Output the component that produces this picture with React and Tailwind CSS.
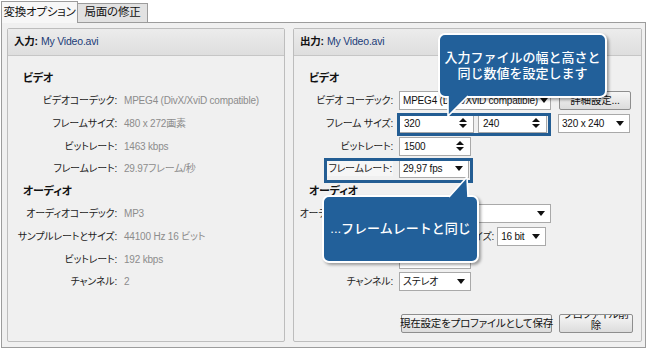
import React from 'react';

const FONT = {
  fontFamily: '"Liberation Sans", "Noto Sans CJK JP", sans-serif',
};

const Arrow = () => (
  <svg width="8" height="5" viewBox="0 0 8 5" className="shrink-0">
    <path d="M0 0 L8 0 L4 5 Z" fill="#111" />
  </svg>
);

const Spin = () => (
  <svg width="8" height="12" viewBox="0 0 8 12" className="shrink-0">
    <path d="M0 5 L8 5 L4 1 Z M0 7 L8 7 L4 11 Z" fill="#111" />
  </svg>
);

const Select = ({ w, children, hideText = false }) => (
  <div
    className="h-[19px] bg-white border border-[#a9a9a9] flex items-center justify-between pl-[3px] pr-[5px] text-[10px] text-[#111] whitespace-nowrap gap-[2px]"
    style={{ width: w }}
  >
    <span className={hideText ? 'invisible' : ''}>{children}</span>
    <Arrow />
  </div>
);

const SpinBox = ({ w, children }) => (
  <div
    className="h-[19px] bg-white border border-[#a9a9a9] flex items-center justify-between pl-[4px] pr-[6px] text-[10px] text-[#111]"
    style={{ width: w }}
  >
    <span>{children}</span>
    <Spin />
  </div>
);

const Button = ({ w, children, className = '' }) => (
  <div
    className={`h-[19px] border border-[#8e8e8e] rounded-[2px] bg-gradient-to-b from-[#f6f6f6] to-[#dcdcdc] flex items-center justify-center text-[10.5px] text-[#111] whitespace-nowrap ${className}`}
    style={{ width: w }}
  >
    {children}
  </div>
);

const GroupHeader = ({ label, file }) => (
  <div className="h-[27px] flex items-center px-[6px] bg-gradient-to-b from-[#ececec] to-[#dedede] border-b border-[#c6c6c6] text-[10.5px]">
    <span className="font-bold text-[#111]">{label}</span>
    <span className="ml-[3px] text-[#1c3c78]">{file}</span>
  </div>
);

const inputRows = [
  { heading: 'ビデオ' },
  { label: 'ビデオコーデック:', value: 'MPEG4 (DivX/XviD compatible)' },
  { label: 'フレームサイズ:', value: '480 x 272画素' },
  { label: 'ビットレート:', value: '1463 kbps' },
  { label: 'フレームレート:', value: '29.97フレーム/秒' },
  { heading: 'オーディオ' },
  { label: 'オーディオコーデック:', value: 'MP3' },
  { label: 'サンプルレートとサイズ:', value: '44100 Hz 16 ビット' },
  { label: 'ビットレート:', value: '192 kbps' },
  { label: 'チャンネル:', value: '2' },
];

const Row = ({ label, children, hideLabel = false }) => (
  <div className="h-[22.6px] flex items-center">
    <div className={`w-[99px] text-right text-[10px] text-[#222] whitespace-nowrap ${hideLabel ? 'invisible' : ''}`}>{label}</div>
    <div className="ml-[6px] flex items-center">{children}</div>
  </div>
);

export default function App() {
  return (
    <div
      className="w-[649px] h-[350px] bg-white relative overflow-hidden [font-feature-settings:'palt'] tracking-[-0.2px]"
      style={FONT}
    >
      {/* Tabs */}
      <div className="flex items-end h-[22px] pl-[1px]">
        <div className="w-[77px] h-[22px] border border-b-0 border-[#9c9c9c] bg-[#f7f7f7] flex items-center justify-center text-[11.5px] text-[#111] whitespace-nowrap relative z-10 -mb-px">
          変換オプション
        </div>
        <div className="w-[70px] h-[19px] border border-l-0 border-b-0 border-[#9c9c9c] bg-[#e2e2e2] flex items-center justify-center text-[11.5px] text-[#111] whitespace-nowrap">
          局面の修正
        </div>
      </div>

      {/* Panel */}
      <div className="ml-[1px] w-[645px] h-[326px] border border-[#9c9c9c] bg-[#f0f0f0] pl-[5px] pt-[5px] flex gap-[8px]">
        {/* Input */}
        <div className="w-[278px] h-[314px] border border-[#bdbdbd] rounded-[2px] bg-[#f0f0f0] flex flex-col">
          <GroupHeader label="入力:" file="My Video.avi" />
          <div className="mt-[11px] flex flex-col">
            {inputRows.map((r, i) =>
              r.heading ? (
                <div key={i} className="h-[22.6px] flex items-center pl-[15px] text-[11px] font-bold text-[#111]">
                  {r.heading}
                </div>
              ) : (
                <div key={i} className="h-[22.6px] flex items-center text-[10px]">
                  <div className="w-[109px] text-right text-[#222] whitespace-nowrap">{r.label}</div>
                  <div className="ml-[7px] text-[#8c8c8c] whitespace-nowrap text-[10px]">{r.value}</div>
                </div>
              )
            )}
          </div>
        </div>

        {/* Output */}
        <div className="w-[349px] h-[314px] border border-[#bdbdbd] rounded-[2px] bg-[#f0f0f0] flex flex-col">
          <GroupHeader label="出力:" file="My Video.avi" />
          <div className="mt-[11px] flex flex-col">
            <div className="h-[22.6px] flex items-center pl-[15px] text-[11px] font-bold text-[#111]">ビデオ</div>
            <Row label="ビデオ コーデック:">
              <Select w={152}>MPEG4 (DivX/XviD compatible)</Select>
              <Button w={72} className="ml-[8px]">詳細設定...</Button>
            </Row>
            <Row label="フレーム サイズ:">
              <SpinBox w={75}>320</SpinBox>
              <div className="ml-[4px]"><SpinBox w={69}>240</SpinBox></div>
              <div className="ml-[11px]"><Select w={72}>320 x 240</Select></div>
            </Row>
            <Row label="ビットレート:">
              <SpinBox w={72}>1500</SpinBox>
            </Row>
            <Row label={<span className="bg-[#f6f6f6] pl-[4px] pr-[1px] py-[2px]">フレームレート:</span>}>
              <Select w={70}>29,97 fps</Select>
            </Row>
            <div className="h-[22.6px] flex items-center pl-[15px] text-[11px] font-bold text-[#111]">オーディオ</div>
            <Row label="オーディオ コーデック:">
              <Select w={152}>MP3</Select>
            </Row>
            <Row label="サンプルレート:" hideLabel>
              <Select w={60} hideText>44100 Hz</Select>
              <span className="ml-[6px] text-[10px] text-[#222] whitespace-nowrap">サイズ:</span>
              <div className="ml-[3px]"><Select w={49}>16 bit</Select></div>
            </Row>
            <Row label="ビットレート:" hideLabel>
              <Select w={72} hideText>192 kbps</Select>
            </Row>
            <Row label="チャンネル:">
              <Select w={72}>ステレオ</Select>
            </Row>
          </div>
          <div className="mt-auto mb-[8px] mr-[8px] flex justify-end gap-[7px]">
            <Button w={151}>現在設定をプロファイルとして保存</Button>
            <div className="w-[74px] h-[19px] border border-[#8e8e8e] rounded-[2px] bg-gradient-to-b from-[#f6f6f6] to-[#dcdcdc] flex flex-col items-center justify-end overflow-hidden text-[10.5px] leading-[11px] text-[#111] pb-[1px] whitespace-nowrap">
              <span>プロファイル削</span>
              <span>除</span>
            </div>
          </div>
        </div>
      </div>

      {/* Highlight frames */}
      <div className="absolute left-[397px] top-[113px] w-[154px] h-[23px] border-[3px] border-[#235d93] pointer-events-none" />
      <div className="absolute left-[324px] top-[158px] w-[149px] h-[25px] border-[3px] border-[#235d93] pointer-events-none" />

      {/* Callout 1 */}
      <div className="absolute left-[438px] top-[33px] w-[169px] h-[65px] rounded-[7px] bg-[#22609a] border-2 border-white shadow-[2px_2px_3px_rgba(0,0,0,0.35)] flex flex-col items-center justify-center text-white text-[13px] font-medium leading-[16px] tracking-normal [font-feature-settings:normal]">
        <span>入力ファイルの幅と高さと</span>
        <span>同じ数値を設定します</span>
      </div>
      <svg className="absolute left-[440px] top-[94px]" width="36" height="26" viewBox="0 0 36 26">
        <path d="M8 0 L8 22 L30 0 Z" fill="#22609a" />
        <path d="M8 2 L8 22 L28 2" fill="none" stroke="white" strokeWidth="1.6" />
      </svg>

      {/* Callout 2 */}
      <div className="absolute left-[322px] top-[195px] w-[157px] h-[68px] rounded-[7px] bg-[#22609a] border-2 border-white shadow-[2px_2px_3px_rgba(0,0,0,0.35)] flex items-center justify-center text-white text-[13px] font-medium tracking-normal [font-feature-settings:normal]">
        ...フレームレートと同じ
      </div>
      <svg className="absolute left-[444px] top-[175px]" width="30" height="24" viewBox="0 0 30 24">
        <path d="M4 23 L23 2 L24 23 Z" fill="#22609a" />
        <path d="M5 22 L23 2 L24 22" fill="none" stroke="white" strokeWidth="1.6" />
      </svg>
    </div>
  );
}
